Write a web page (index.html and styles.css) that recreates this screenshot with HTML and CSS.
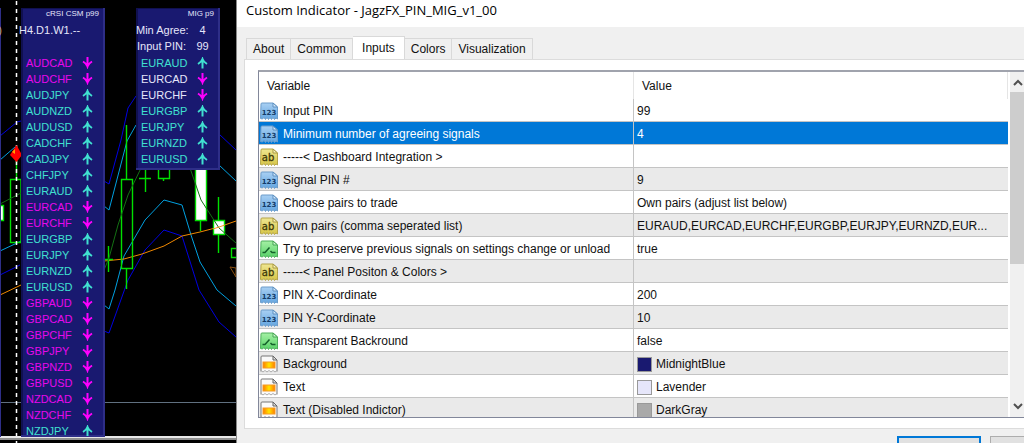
FILE: index.html
```
<!DOCTYPE html>
<html lang="en">
<head>
<meta charset="utf-8">
<title>Custom Indicator - JagzFX_PIN_MIG_v1_00</title>
<link rel="stylesheet" href="styles.css">
</head>
<body>
<svg class="defs" aria-hidden="true">
  <defs>
    <linearGradient id="gb" x1="0" y1="0" x2="0" y2="1"><stop offset="0" stop-color="#a9d0f3"/><stop offset="1" stop-color="#62a5e0"/></linearGradient>
    <linearGradient id="gy" x1="0" y1="0" x2="0" y2="1"><stop offset="0" stop-color="#efe691"/><stop offset="1" stop-color="#d6c545"/></linearGradient>
    <linearGradient id="gg" x1="0" y1="0" x2="0" y2="1"><stop offset="0" stop-color="#a4f0a4"/><stop offset="1" stop-color="#58d268"/></linearGradient>
    <linearGradient id="go" x1="0" y1="0" x2="1" y2="0"><stop offset="0" stop-color="#ff7a00"/><stop offset=".5" stop-color="#ffe600"/><stop offset="1" stop-color="#ff7a00"/></linearGradient>
    <symbol id="up" viewBox="0 0 11 12"><path d="M5.500 11.500V2M1 7Q4.500 5 5.500 2Q6.500 5 10 7" fill="none" stroke="currentColor" stroke-width="2"/></symbol>
    <symbol id="down" viewBox="0 0 11 12"><path d="M5.500 0V9.500M1 4.500Q4.500 6.500 5.500 9.500Q6.500 6.500 10 4.500" fill="none" stroke="currentColor" stroke-width="2"/></symbol>
    <symbol id="sheet" viewBox="0 0 18 18"><path d="M1 2Q1 1 2 1H13L17.500 5V17L16 16L14.500 17.500L13 15.500L11.500 17.500L10 15.500L8.500 17.500L7 15.500L5.500 17.500L4 15.500L2.500 17L.5 16.500Z"/></symbol>
    <symbol id="int" viewBox="0 0 18 18"><use href="#sheet" fill="url(#gb)" stroke="#6c9cca"/><path d="M13 1V5H17.500Z" fill="#d3e8fa" stroke="#5c8fc0"/><text x="9" y="13" class="glyph glyph-int">123</text></symbol>
    <symbol id="str" viewBox="0 0 18 18"><use href="#sheet" fill="url(#gy)" stroke="#b5a548"/><path d="M13 1V5H17.500Z" fill="#f8f3bd" stroke="#a89a40"/><text x="8" y="13" class="glyph glyph-str">ab</text></symbol>
    <symbol id="bool" viewBox="0 0 18 18"><use href="#sheet" fill="url(#gg)" stroke="#4fae5c"/><path d="M13 1V5H17.500Z" fill="#d0f8d0" stroke="#45a552"/><path d="M2.500 12.500H5L9.500 7.500M10.500 11L12 12.500H15.500" fill="none" stroke="#14602a" stroke-width="1.500"/></symbol>
    <symbol id="col" viewBox="0 0 18 18"><path d="M1 16.500V2Q1 1 2 1H13L17 5V16.500" fill="#fafafa" stroke="#777"/><path d="M1 15.500L3 17L5 15.500L7 17L9 15.500L11 17L13 15.500L15 17L17 15.500" fill="none" stroke="#aaa"/><path d="M13 1V5H17Z" fill="#ddd" stroke="#666"/><rect x="3" y="7" width="12" height="6" fill="url(#go)" stroke="#f59a23"/></symbol>
  </defs>
</svg>
<div class="screen">
  <section class="chart" aria-label="Price chart">
    <svg class="plot" width="236" height="443" fill="none" aria-hidden="true">
      <path d="M0 402.500H236" stroke="#607080"/>
      <g stroke="#0000e0">
        <path d="M0 136L17 122L21 121M0 275L20 265M104 181L109 184L121 140L128 108L136 96M219 134L236 150"/>
        <path d="M104 331L109 333L128 280L145 250L164 230L182 236L199 290L219 322L236 337"/>
      </g>
      <g stroke="#00a0e0">
        <path d="M0 160L15 147M0 251L17 243L21 241M104 206L109 210L127 141L136 125M219 165L236 181"/>
        <path d="M104 305L109 309L115 290L124 256L145 220L164 200L182 205L191 235L200 262L217 290L236 306"/>
      </g>
      <path d="M0 295L21 285M104 261L124 259L142 254L164 246L182 236L200 232L219 227L236 221" stroke="#f08800"/>
      <path d="M230 267L236 277V268Z" stroke="#8a5010"/>
      <g stroke="#00e000" stroke-width="1.400">
        <path d="M16.500 155V179M126.500 125V179M126.500 269V289M145.500 165V192M139 178.500H151M108.500 246V272M104 259.500H113M163.500 178V181M200.500 220V231M218.500 197V253"/>
        <path d="M10.500 179.500H21V242.500H10.500ZM121.500 179.500H132.500V268.500H121.500ZM158.500 160.500H169.500V178.500H158.500ZM236 248.500H231.500V257.500H236"/>
        <path d="M-1 205.500H3.500V220.500H-1ZM195.500 160.500H206.500V220.500H195.500ZM213.500 220.500H224.500V234.500H213.500Z" fill="#fff"/>
      </g>
      <path d="M0 204L21 193M104 270L109 258L118 225L128 195L143 164M190 168L201 200L219 228L236 243" stroke="#137013"/>
      <path d="M213 229L225 225" stroke="#ff9a20"/>
      <path d="M16.500 1V443" stroke="#fff" stroke-width="1.500" stroke-dasharray="4 4"/>
      <path d="M16.500 145L22 155L16.500 162L10 155Z" fill="#f00"/><path d="M12 152L15 149V154Z" fill="#ffa000"/>
      <path d="M0 437H236" stroke="#e8e8e8" stroke-width="2"/><path d="M0 439H236" stroke="#909090" stroke-width="2"/>
    </svg>
    <div class="panel panel-edge"><p>)</p></div>
    <div class="panel panel-csm">
      <h2>cRSI CSM p99</h2>
      <p class="frames">H4.D1.W1.--</p>
      <ul id="csm"></ul>
    </div>
    <div class="panel panel-mig">
      <h2>MIG p9</h2>
      <dl><dt>Min Agree:</dt><dd>4</dd><dt>Input PIN:</dt><dd>99</dd></dl>
      <ul id="mig"></ul>
    </div>
  </section>
  <main class="dialog">
    <h1>Custom Indicator - JagzFX_PIN_MIG_v1_00</h1>
    <div class="body">
      <div class="tabs" role="tablist">
        <button role="tab">About</button><button role="tab">Common</button><button role="tab" class="active" aria-selected="true">Inputs</button><button role="tab">Colors</button><button role="tab">Visualization</button>
      </div>
      <div class="page">
        <div class="list">
          <table>
            <colgroup><col class="c-var"><col></colgroup>
            <thead><tr><th>Variable</th><th>Value</th></tr></thead>
            <tbody id="rows"></tbody>
          </table>
          <div class="scroll" aria-hidden="true">
            <svg width="14" height="20" fill="none" stroke="#505050" stroke-width="2"><path d="M4 13L8 9L12 13"/></svg>
            <div class="thumb"></div>
            <svg class="last" width="14" height="20" fill="none" stroke="#505050" stroke-width="2"><path d="M4 7L8 11L12 7"/></svg>
          </div>
        </div>
      </div>
      <div class="actions"><button class="primary" aria-label="OK"></button><button aria-label="Cancel"></button></div>
    </div>
  </main>
</div>
<script src="app.js"></script>
</body>
</html>
```
FILE: styles.css
```
* { box-sizing: border-box; }
body { margin: 0; overflow: hidden; background: #000; font: 12px/16px "Liberation Sans", Arial, sans-serif; color: #111; }
h1, h2, p, ul, dl, dd { margin: 0; padding: 0; font-weight: normal; }
.defs { position: absolute; width: 0; height: 0; }
.glyph { font-family: "DejaVu Sans", sans-serif; text-anchor: middle; }
.glyph-int { font-size: 7px; font-weight: bold; fill: #153c68; }
.glyph-str { font-size: 10px; fill: #3c3708; stroke: #3c3708; stroke-width: .3; }
.screen { display: grid; grid-template-columns: 236px 1fr; height: 100vh; }

.chart { position: relative; overflow: hidden; background: #000; }
.plot { display: block; }
.panel { position: absolute; top: 8px; width: 84px; background: #191970; border: solid #2e2e88; border-width: 0 2px 2px 0; box-shadow: inset 2px 1px #101050; color: #e6e6fa; font-size: 11px; line-height: 16px; }
.panel-csm { left: 21px; height: 429px; }
.panel-csm ul { overflow: hidden; height: 382px; }
.panel-mig { left: 136px; }
.panel-edge { left: -83px; height: 429px; padding-top: 14px; text-align: right; }
.panel-edge p { margin-right: -3px; color: #c0a070; }
.panel h2 { font-size: 8px; line-height: 12px; text-align: right; padding-right: 4px; }
.frames { height: 34px; margin-left: -2px; padding-top: 2px; }
.panel dl { display: grid; grid-template-columns: 51px 1fr; padding-top: 2px; }
.panel dt { text-align: center; white-space: nowrap; }
.panel dd { text-align: center; }
.panel ul { padding-top: 1px; }
.panel dl + ul { padding-bottom: 1px; }
.panel li { display: flex; align-items: center; height: 16px; padding: 0 10px 0 5px; color: #40e0d0; }
.panel li span { flex: 1; }
.panel li svg { flex: none; }
.panel li.sell, .panel .sell svg, .panel .off svg { color: #f0f; }
.panel li.off { color: #e6e6fa; }
.panel li.sell span { color: #e808ec; }

.dialog { display: flex; flex-direction: column; min-width: 0; background: #f0f0f0; border-left: 1px solid #888; overflow: hidden; }
h1 { height: 27px; padding-left: 9px; background: #fff; font: 13px/20px "Open Sans", sans-serif; color: #000; }
.body { flex: 1; min-height: 0; display: flex; flex-direction: column; padding: 9px 0 0 7px; }
.tabs { display: flex; align-items: flex-end; height: 23px; padding-left: 2px; }
.tabs button { height: 21px; padding: 0 6px; border: 1px solid #d9d9d9; border-width: 1px 1px 0 0; background: #f0f0f0; font: inherit; color: #111; }
.tabs button:first-child { border-left-width: 1px; }
.tabs .active { height: 24px; padding: 0 9px 2px; margin-bottom: -1px; background: #fff; }
.page { flex: 1; min-height: 0; padding: 10px 0 10px 13px; background: #fff; border: 1px solid #dcdcdc; border-right: 0; }
.list { display: flex; gap: 2px; height: 100%; overflow: hidden; border: solid #82879a; border-width: 2px 0 1px 1px; border-color: #a0a3ad #82879a #82879a; }
table { flex: 1; min-width: 0; border-spacing: 0; table-layout: fixed; align-self: flex-start; }
.c-var { width: 375px; }
th { height: 27px; padding: 1px 8px 0; text-align: left; font-weight: normal; border-right: 1px solid #e5e5e5; }
td { height: 23px; padding: 2px 3px 0; border-bottom: 1px solid #c4c4c4; white-space: nowrap; overflow: hidden; text-overflow: ellipsis; }
td:first-child { padding-left: 1px; border-right: 1px solid #c4c4c4; }
.gray td { background: #eaeaea; }
.selected td { background: #0078d7; color: #fff; }
.cell { display: flex; align-items: center; gap: 5px; }
.swatch { width: 15px; height: 15px; border: 1px solid #999; }
td:last-child .cell { gap: 4px; }
.midnightblue { background: #191970; }
.lavender { background: #e6e6fa; }
.darkgray { background: #a9a9a9; }
.scroll { display: flex; flex-direction: column; width: 14px; background: #f0f0f0; }
.thumb { height: 172px; background: #cdcdcd; }
.last { margin-top: auto; }
.actions { display: flex; justify-content: flex-end; gap: 9px; height: 14px; padding-top: 7px; overflow: hidden; }
.actions button { flex: none; width: 34px; height: 23px; border: 1px solid #adadad; border-right: 0; background: #e1e1e1; }
.actions .primary { width: 84px; border: 2px solid #0078d7; }
```
FILE: app.js
```
const icon = (id, w, h) => `<svg width="${w}" height="${h}" aria-hidden="true"><use href="#${id}"/></svg>`;
const signal = ([pair, dir, off]) =>
  `<li class="${off ? "off" : dir === "down" ? "sell" : "buy"}"><span>${pair}</span>${icon(dir, 11, 12)}</li>`;

const csm = "AUDCAD- AUDCHF- AUDJPY+ AUDNZD+ AUDUSD+ CADCHF+ CADJPY+ CHFJPY+ EURAUD+ EURCAD- EURCHF- EURGBP+ EURJPY+ EURNZD+ EURUSD+ GBPAUD- GBPCAD- GBPCHF- GBPJPY- GBPNZD- GBPUSD- NZDCAD- NZDCHF- NZDJPY+";
document.getElementById("csm").innerHTML = csm.split(" ")
  .map(s => signal([s.slice(0, 6), s[6] === "+" ? "up" : "down"])).join("");

document.getElementById("mig").innerHTML = [
  ["EURAUD", "up"], ["EURCAD", "down", true], ["EURCHF", "down", true],
  ["EURGBP", "up"], ["EURJPY", "up"], ["EURNZD", "up"], ["EURUSD", "up"]
].map(signal).join("");

const rows = [
  ["int", "Input PIN", "99"],
  ["int", "Minimum number of agreeing signals", "4"],
  ["str", "-----&lt; Dashboard Integration &gt;", ""],
  ["int", "Signal PIN #", "9"],
  ["int", "Choose pairs to trade", "Own pairs (adjust list below)"],
  ["str", "Own pairs (comma seperated list)", "EURAUD,EURCAD,EURCHF,EURGBP,EURJPY,EURNZD,EUR..."],
  ["bool", "Try to preserve previous signals on settings change or unload", "true"],
  ["str", "-----&lt; Panel Positon &amp; Colors &gt;", ""],
  ["int", "PIN X-Coordinate", "200"],
  ["int", "PIN Y-Coordinate", "10"],
  ["bool", "Transparent Backround", "false"],
  ["col", "Background", "MidnightBlue"],
  ["col", "Text", "Lavender"],
  ["col", "Text (Disabled Indictor)", "DarkGray"]
];
document.getElementById("rows").innerHTML = rows.map(([type, name, value], i) => {
  const cls = i === 1 ? "selected" : i % 2 ? "gray" : "";
  const shown = type === "col"
    ? `<div class="cell"><span class="swatch ${value.toLowerCase()}"></span>${value}</div>` : value;
  return `<tr class="${cls}"><td><div class="cell">${icon(type, 18, 18)}${name}</div></td><td>${shown}</td></tr>`;
}).join("");
```
